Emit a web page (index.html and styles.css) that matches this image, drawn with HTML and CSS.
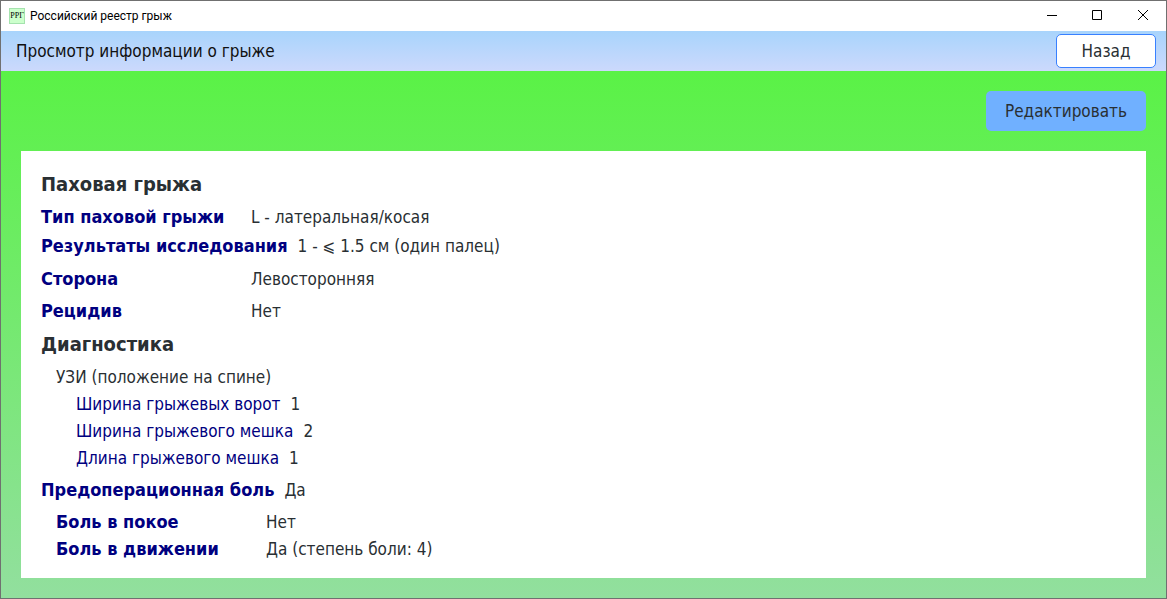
FILE: index.html
```html
<!DOCTYPE html>
<html lang="ru">
<head>
<meta charset="utf-8">
<title>Российский реестр грыж</title>
<link rel="stylesheet" href="styles.css">
</head>
<body>
<div class="window">
  <header class="titlebar">
    <span class="app-icon">РРГ</span>
    <span class="app-name">Российский реестр грыж</span>
    <div class="controls">
      <button class="control" type="button" aria-label="Свернуть"><svg width="12" height="12" viewBox="0 0 12 12"><path d="M2 5.5H12"/></svg></button>
      <button class="control" type="button" aria-label="Развернуть"><svg width="12" height="12" viewBox="0 0 12 12"><path d="M1.5 .5H10.5V9.5H1.5Z"/></svg></button>
      <button class="control" type="button" aria-label="Закрыть"><svg width="12" height="12" viewBox="0 0 12 12"><path d="M1 0L11 10M11 0L1 10"/></svg></button>
    </div>
  </header>
  <nav class="toolbar">
    <h1 class="page-title">Просмотр информации о грыже</h1>
    <button class="back" type="button">Назад</button>
  </nav>
  <main class="content">
    <button class="edit" type="button">Редактировать</button>
    <section class="card">
      <h2 class="heading">Паховая грыжа</h2>
      <dl class="list">
        <div class="row tight"><dt class="label">Тип паховой грыжи</dt><dd class="value">L - латеральная/косая</dd></div>
        <div class="row tall"><dt class="label">Результаты исследования</dt><dd class="value">1 - ⩽ 1.5 см (один палец)</dd></div>
        <div class="row"><dt class="label">Сторона</dt><dd class="value">Левосторонняя</dd></div>
        <div class="row"><dt class="label">Рецидив</dt><dd class="value">Нет</dd></div>
      </dl>
      <h2 class="heading">Диагностика</h2>
      <div class="group">
        <p class="method">УЗИ (положение на спине)</p>
        <dl class="measures">
          <div class="row"><dt class="measure">Ширина грыжевых ворот</dt><dd class="value">1</dd></div>
          <div class="row"><dt class="measure">Ширина грыжевого мешка</dt><dd class="value">2</dd></div>
          <div class="row"><dt class="measure">Длина грыжевого мешка</dt><dd class="value">1</dd></div>
        </dl>
      </div>
      <dl class="list">
        <div class="row"><dt class="label">Предоперационная боль</dt><dd class="value">Да</dd></div>
      </dl>
      <dl class="group">
        <div class="row"><dt class="label">Боль в покое</dt><dd class="value">Нет</dd></div>
        <div class="row"><dt class="label">Боль в движении</dt><dd class="value">Да (степень боли: 4)</dd></div>
      </dl>
    </section>
  </main>
</div>
</body>
</html>
```
FILE: styles.css
```css
* {
  box-sizing: border-box;
  margin: 0;
  padding: 0;
}

body {
  font: 17px/22px "DejaVu Sans Condensed", "Noto Sans", sans-serif;
  color: #292f33;
}

button {
  font: inherit;
  color: inherit;
}

.window {
  display: flex;
  flex-direction: column;
  min-height: 100vh;
  border: 1px solid #707070;
}

.titlebar {
  display: flex;
  align-items: center;
  height: 30px;
  padding-left: 8px;
  background: #fff;
  color: #000;
  font: 12px/16px Roboto, "Noto Sans", sans-serif;
}

.app-icon {
  display: flex;
  justify-content: center;
  width: 16px;
  margin-right: 5px;
  border: 1px solid #a5e3ae;
  background: #ccffcc;
  font: 8px/14px "Liberation Serif", serif;
}

.controls {
  display: flex;
  align-self: stretch;
  margin-left: auto;
}

.control {
  display: flex;
  align-items: center;
  justify-content: center;
  width: 46px;
  border: 0;
  background: none;
}

.control svg {
  fill: none;
  stroke: #000;
}

.toolbar {
  display: flex;
  align-items: center;
  justify-content: space-between;
  height: 40px;
  padding: 0 10px 0 15px;
  background: linear-gradient(#a8d4fc, #ccd9fc);
}

.page-title {
  color: #101010;
  font-size: 17px;
  font-weight: 400;
}

.back {
  width: 100px;
  height: 34px;
  border: 1px solid #3880ff;
  border-radius: 5px;
  background: #fff;
}

.content {
  display: flex;
  flex: 1;
  flex-direction: column;
  gap: 20px;
  padding: 20px;
  background: linear-gradient(#5af246, #92df9e);
}

.edit {
  align-self: flex-end;
  min-width: 160px;
  height: 40px;
  padding: 0 15px;
  border: 0;
  border-radius: 5px;
  background: #70b0ff;
}

.card {
  display: flex;
  flex: 1;
  flex-direction: column;
  gap: 10px;
  padding: 21px 20px 17px;
  background: #fff;
}

.heading {
  font-size: 20px;
  line-height: 24px;
}

.list {
  display: flex;
  flex-direction: column;
  gap: 10px;
}

.row {
  display: flex;
  gap: 10px;
}

.tight {
  margin-bottom: -4px;
}

.tall {
  line-height: 24px;
}

.label {
  min-width: 200px;
  color: #000080;
  font-size: 18px;
  font-weight: 700;
}

.group,
.measures {
  display: flex;
  flex-direction: column;
  gap: 5px;
}

.group {
  padding-left: 15px;
}

.measures {
  padding-left: 20px;
}

.measure {
  color: #000080;
}
```
